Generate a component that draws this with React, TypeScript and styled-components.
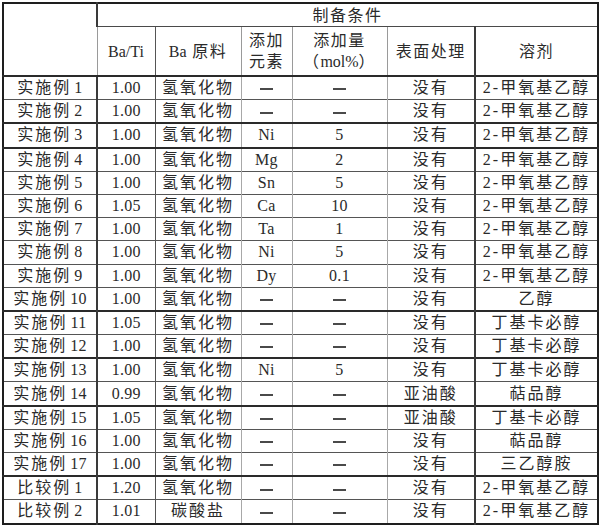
import React from "react";
import styled, { createGlobalStyle } from "styled-components";

const GlobalStyles = createGlobalStyle`
  html, body {
    margin: 0;
    padding: 0;
    background: #ffffff;
  }
  body {
    font-family: "Liberation Serif", "Noto Sans CJK SC", serif;
    color: #2a2a2a;
  }
`;

const Page = styled.div`
  padding: 2px 3px 0 2px;
`;

const Table = styled.table`
  width: 595px;
  table-layout: fixed;
  border-collapse: collapse;
  border: 2px solid #1e1e1e;
  font-size: 16px;
`;

const HeadCell = styled.td<{ $left?: string; $tall?: boolean }>`
  height: ${(p) => (p.$tall ? "48px" : "22px")};
  padding: 0;
  text-align: center;
  vertical-align: middle;
  line-height: 21px;
  letter-spacing: 1.5px;
  border-top: 1px solid #4a4a4a;
  border-bottom: 1px solid #4a4a4a;
  border-left: ${(p) => p.$left || "1px solid #9a9a9a"};
`;

const Row = styled.tr<{ $thick?: boolean }>`
  td {
    border-top: ${(p) => (p.$thick ? "2px solid #2a2a2a" : "1px solid #555555")};
  }
`;

const Cell = styled.td<{ $left?: string; $latin?: boolean }>`
  height: 22.2px;
  padding: 0;
  text-align: center;
  vertical-align: middle;
  line-height: 18px;
  letter-spacing: ${(p) => (p.$latin ? "0.3px" : "2px")};
  white-space: nowrap;
  overflow: hidden;
  border-left: ${(p) => p.$left || "1px solid #a8a8a8"};
`;

const Num = styled.span`
  letter-spacing: 0.3px;
  margin-left: 3px;
`;

const Latin = styled.span`
  letter-spacing: 0;
`;

const Dash = styled.span`
  display: inline-block;
  width: 13px;
  height: 2px;
  background: #4a4a4a;
  vertical-align: middle;
`;

const DARK = "2px solid #3a3a3a";
const MID = "1px solid #555555";

type Item = [string, string, string, string, string, string, string, boolean?];

const rows: Item[] = [
  ["实施例 1", "1.00", "氢氧化物", "—", "—", "没有", "2-甲氧基乙醇", true],
  ["实施例 2", "1.00", "氢氧化物", "—", "—", "没有", "2-甲氧基乙醇"],
  ["实施例 3", "1.00", "氢氧化物", "Ni", "5", "没有", "2-甲氧基乙醇", true],
  ["实施例 4", "1.00", "氢氧化物", "Mg", "2", "没有", "2-甲氧基乙醇", true],
  ["实施例 5", "1.00", "氢氧化物", "Sn", "5", "没有", "2-甲氧基乙醇"],
  ["实施例 6", "1.05", "氢氧化物", "Ca", "10", "没有", "2-甲氧基乙醇"],
  ["实施例 7", "1.00", "氢氧化物", "Ta", "1", "没有", "2-甲氧基乙醇"],
  ["实施例 8", "1.00", "氢氧化物", "Ni", "5", "没有", "2-甲氧基乙醇"],
  ["实施例 9", "1.00", "氢氧化物", "Dy", "0.1", "没有", "2-甲氧基乙醇"],
  ["实施例 10", "1.00", "氢氧化物", "—", "—", "没有", "乙醇"],
  ["实施例 11", "1.05", "氢氧化物", "—", "—", "没有", "丁基卡必醇", true],
  ["实施例 12", "1.00", "氢氧化物", "—", "—", "没有", "丁基卡必醇"],
  ["实施例 13", "1.00", "氢氧化物", "Ni", "5", "没有", "丁基卡必醇", true],
  ["实施例 14", "0.99", "氢氧化物", "—", "—", "亚油酸", "萜品醇"],
  ["实施例 15", "1.05", "氢氧化物", "—", "—", "亚油酸", "丁基卡必醇", true],
  ["实施例 16", "1.00", "氢氧化物", "—", "—", "没有", "萜品醇"],
  ["实施例 17", "1.00", "氢氧化物", "—", "—", "没有", "三乙醇胺"],
  ["比较例 1", "1.20", "氢氧化物", "—", "—", "没有", "2-甲氧基乙醇", true],
  ["比较例 2", "1.01", "碳酸盐", "—", "—", "没有", "2-甲氧基乙醇"],
];

const widths = [94, 58, 86, 51, 95, 88, 123];

const show = (v: string) => (v === "—" ? <Dash aria-label="—" /> : v);

const labelOf = (label: string) => {
  const [word, n] = label.split(" ");
  return (
    <>
      {word}
      <Num>{n}</Num>
    </>
  );
};

export default function App() {
  return (
    <Page>
      <GlobalStyles />
      <Table>
        <colgroup>
          {widths.map((w, i) => (
            <col key={i} style={{ width: w }} />
          ))}
        </colgroup>
        <tbody>
          <tr>
            <HeadCell rowSpan={2} $left="none" />
            <HeadCell colSpan={6} $left={DARK}>
              制备条件
            </HeadCell>
          </tr>
          <tr>
            <HeadCell $tall>
              <Latin>Ba/Ti</Latin>
            </HeadCell>
            <HeadCell $tall $left={MID}>
              <Latin>Ba</Latin> 原料
            </HeadCell>
            <HeadCell $tall>
              添加
              <br />
              元素
            </HeadCell>
            <HeadCell $tall>
              添加量
              <br />
              （<Latin>mol%</Latin>）
            </HeadCell>
            <HeadCell $tall>表面处理</HeadCell>
            <HeadCell $tall $left={DARK}>溶剂</HeadCell>
          </tr>
          {rows.map(([label, ratio, source, element, amount, surface, solvent, thick]) => (
            <Row key={label} $thick={thick}>
              <Cell $left="none">{labelOf(label)}</Cell>
              <Cell $left={DARK} $latin>
                {ratio}
              </Cell>
              <Cell $left={MID}>{source}</Cell>
              <Cell $latin>{show(element)}</Cell>
              <Cell $latin>{show(amount)}</Cell>
              <Cell>{surface}</Cell>
              <Cell $left={DARK}>{solvent}</Cell>
            </Row>
          ))}
        </tbody>
      </Table>
    </Page>
  );
}
